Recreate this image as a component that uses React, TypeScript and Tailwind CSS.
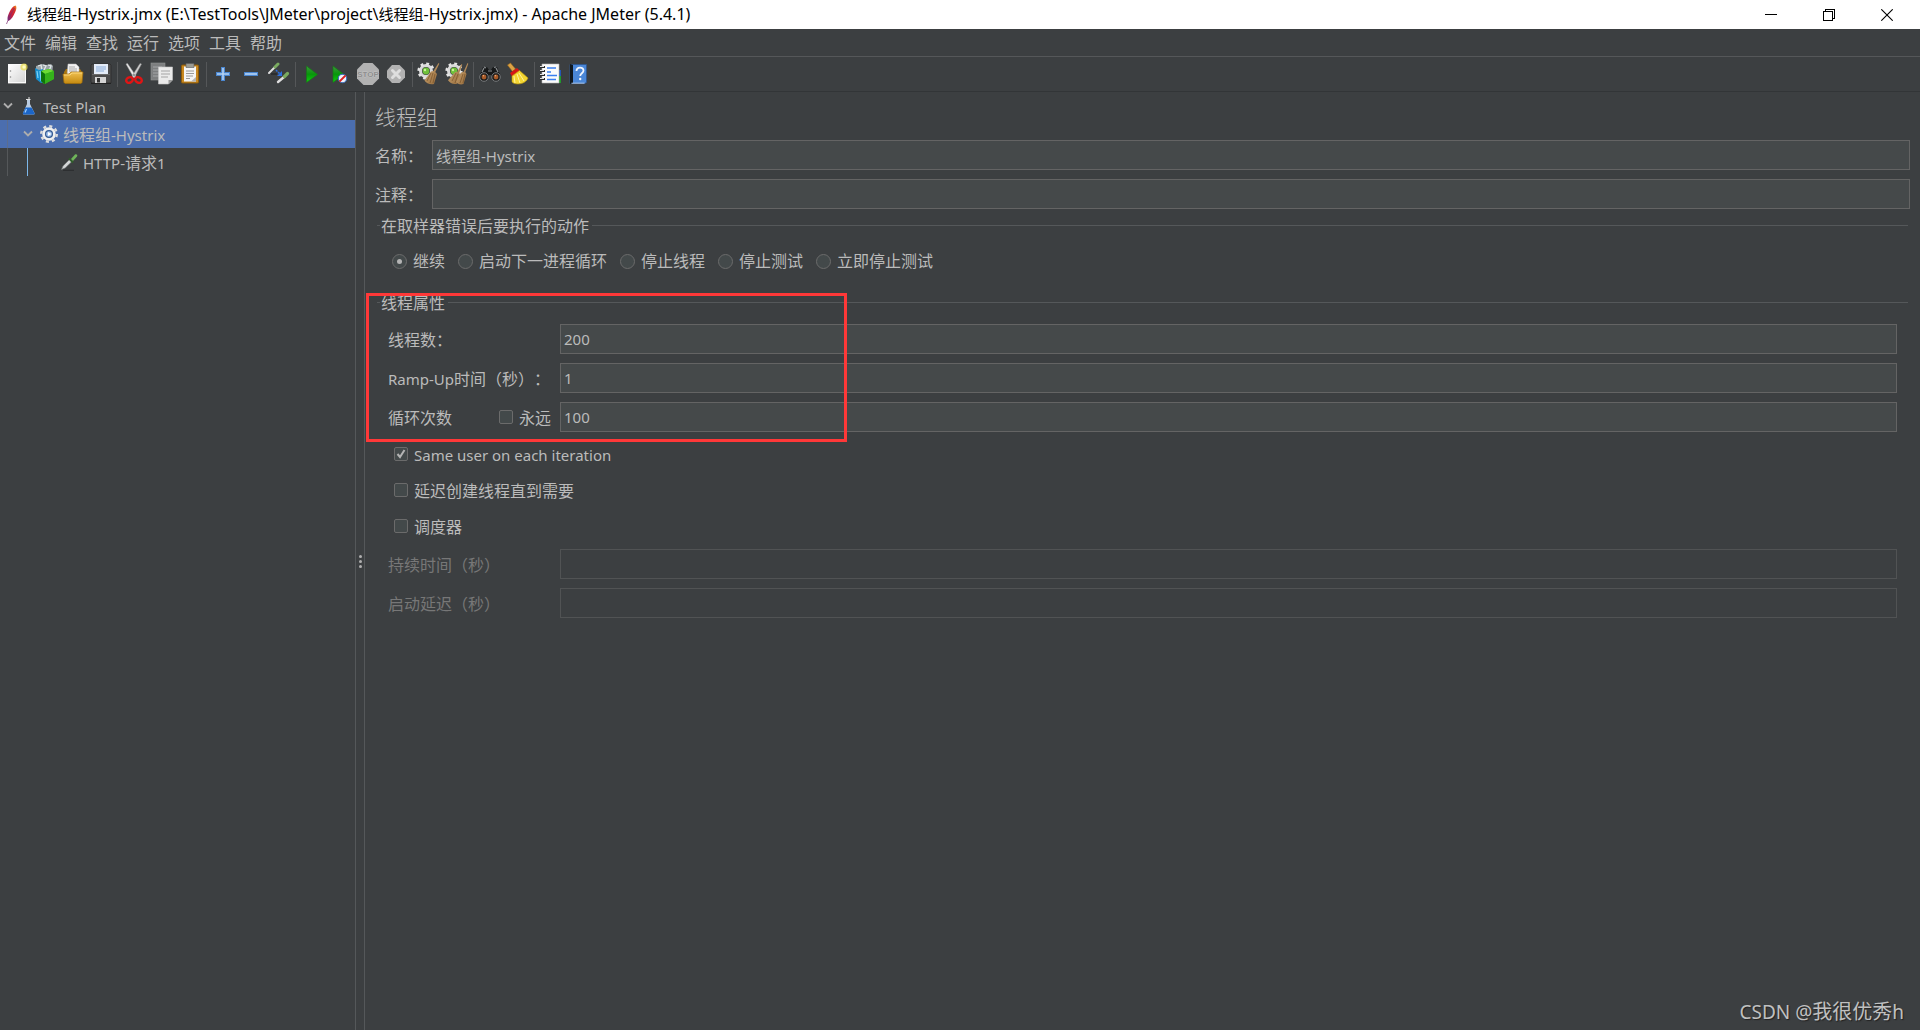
import React, { useState } from 'react';

type IconProps = { children: React.ReactNode };

function Icon({ children }: IconProps) {
  return (
    <svg viewBox="0 0 24 24" className="w-6 h-6" aria-hidden="true">
      {children}
    </svg>
  );
}

/* Shared gradients, referenced by id from the toolbar icons */
function Gradients() {
  return (
    <svg className="absolute w-0 h-0" aria-hidden="true">
      <defs>
        <linearGradient id="paper" x1="0" y1="0" x2="1" y2="1">
          <stop offset="0" stopColor="#ffffff" />
          <stop offset="1" stopColor="#d4d4d4" />
        </linearGradient>
        <linearGradient id="gold" x1="0" y1="0" x2="0" y2="1">
          <stop offset="0" stopColor="#f0c050" />
          <stop offset="1" stopColor="#c58a10" />
        </linearGradient>
        <linearGradient id="play" x1="0" y1="0" x2="0" y2="1">
          <stop offset="0" stopColor="#3d9a3d" />
          <stop offset="0.5" stopColor="#07960a" />
          <stop offset="1" stopColor="#0fd010" />
        </linearGradient>
        <linearGradient id="straw" x1="0" y1="0" x2="1" y2="1">
          <stop offset="0" stopColor="#d6b07c" />
          <stop offset="1" stopColor="#8d6334" />
        </linearGradient>
        <linearGradient id="feather" x1="0" y1="1" x2="1" y2="0">
          <stop offset="0" stopColor="#6a2a87" />
          <stop offset="0.45" stopColor="#c8203c" />
          <stop offset="0.75" stopColor="#d8322a" />
          <stop offset="1" stopColor="#f49a20" />
        </linearGradient>
      </defs>
    </svg>
  );
}

const NewIcon = () => (
  <Icon>
    <rect x="3.5" y="2.5" width="17" height="18" fill="url(#paper)" stroke="#fafafa" />
    <path d="M3 21.5h18" stroke="#8a8a8a" />
    <circle cx="5.5" cy="9" r="0.8" fill="#888" />
    <circle cx="5.5" cy="15" r="0.8" fill="#888" />
    <circle cx="19" cy="5" r="3.6" fill="#e9dc50" opacity="0.75" />
    <circle cx="19" cy="5" r="1.7" fill="#fffbc0" />
  </Icon>
);

const TemplatesIcon = () => (
  <Icon>
    <path d="M3 4l6-2 4 1 5-1 2 2-1 8-16 1z" fill="#9aa4a8" />
    <path d="M5 4l3-1 1 5M10 3l3 1-2 4M15 3l3 1-2 5" stroke="#e3e8ea" strokeWidth="1.3" fill="none" />
    <path d="M2 6l4 2 4-1 1 13-3 1-5-4z" fill="#168fd0" />
    <path d="M4 9l1 7M7 9l1 10" stroke="#7fd3f7" strokeWidth="1.2" />
    <path d="M8 9l8-2 5 2v8l-10 5-3-3z" fill="#2fa916" />
    <path d="M8 9l8-2 5 2-9 3z" fill="#6bda35" />
    <path d="M12 12l9-3v8l-9 5z" fill="#35b21b" />
    <path d="M8 9l4 3v10l-4-3z" fill="#0e740b" />
  </Icon>
);

const OpenIcon = () => (
  <Icon>
    <path d="M3 10l2-3h14l2 3v10l-1 1H4l-1-1z" fill="#a87610" />
    <path d="M7 2h8l3 3v9H6z" fill="#f2f2f2" stroke="#bbb" strokeWidth="0.5" />
    <path d="M8 5h6M8 7h8M8 9h8" stroke="#a9a9a9" />
    <path d="M2 12h6l2-2h12l-1 10.5-1 1H4l-1-1z" fill="url(#gold)" stroke="#a36f08" strokeWidth="0.7" />
    <path d="M3 13h6l2-2h10" stroke="#ffe08a" strokeWidth="0.8" fill="none" />
  </Icon>
);

const SaveIcon = () => (
  <Icon>
    <path d="M3 2h18l1 1v18H3l-1-1V3z" fill="#4c4c4c" stroke="#2b2b2b" strokeWidth="0.8" />
    <rect x="5" y="2" width="14" height="10" fill="#e4ecf8" />
    <path d="M7 5h10M7 7h10M7 9h8" stroke="#8badda" />
    <path d="M3 12.5h18" stroke="#6b6b6b" />
    <rect x="6" y="15" width="11" height="6" fill="#d4d4d4" />
    <rect x="8" y="16" width="3" height="4.5" fill="#333" />
    <path d="M2 21.5h20" stroke="#222" />
  </Icon>
);

const CutIcon = () => (
  <Icon>
    <path d="M4 2l1.5-.5L14 14l-2 2z" fill="#e9e9e9" stroke="#a0a0a0" strokeWidth="0.5" />
    <path d="M19.5 2L18 1.5 10 14l2 2z" fill="#d0d0d0" stroke="#8f8f8f" strokeWidth="0.5" />
    <ellipse cx="7.5" cy="18" rx="3.4" ry="2.7" fill="none" stroke="#e01515" strokeWidth="2.4" transform="rotate(-25 7.5 18)" />
    <ellipse cx="16.5" cy="18" rx="3.4" ry="2.7" fill="none" stroke="#e01515" strokeWidth="2.4" transform="rotate(25 16.5 18)" />
    <circle cx="12" cy="13" r="0.8" fill="#555" />
  </Icon>
);

const CopyIcon = () => (
  <Icon>
    <rect x="1" y="1" width="14" height="17" fill="#7d7f80" stroke="#909292" strokeWidth="0.6" />
    <path d="M3 5h9M3 8h6M3 11h6M3 14h6" stroke="#a5a7a8" />
    <path d="M8.5 5h14v13l-4 4h-10z" fill="#eaeaea" stroke="#c8c8c8" strokeWidth="0.6" />
    <path d="M11 9h9M11 12h9M11 15h7" stroke="#a4a4a4" />
    <path d="M22.5 18h-4v4z" fill="#9a9a9a" />
  </Icon>
);

const PasteIcon = () => (
  <Icon>
    <rect x="3.5" y="3" width="17" height="18" rx="1" fill="#c88820" stroke="#8b5a0a" />
    <path d="M6 4.5h12v15h-12z" fill="#f5f5f5" />
    <path d="M8 1.5h8v4H8z" fill="#9b9b93" stroke="#5a5a5a" strokeWidth="0.6" />
    <path d="M8 9h8M8 11.5h8M8 14h7M8 16.5h4" stroke="#9a9a9a" />
    <path d="M18 15v4.5h-5z" fill="#b5b5b5" />
  </Icon>
);

const PlusIcon = () => (
  <Icon>
    <path d="M12 5v14M5 12h14" stroke="#4a86cf" strokeWidth="4" />
    <path d="M12 6v12M6 12h12" stroke="#b4d2f4" strokeWidth="1.6" />
  </Icon>
);

const MinusIcon = () => (
  <Icon>
    <path d="M5 12h14" stroke="#4a86cf" strokeWidth="4" />
    <path d="M6 12h12" stroke="#b4d2f4" strokeWidth="1.6" />
  </Icon>
);

const ToggleIcon = () => (
  <Icon>
    <path d="M2 11l6-6" stroke="#dedede" strokeWidth="2" strokeLinecap="round" />
    <path d="M8 5l3-3" stroke="#7aab60" strokeWidth="3" strokeLinecap="round" />
    <path d="M11 20l6-5" stroke="#dedede" strokeWidth="2.4" strokeLinecap="round" />
    <path d="M17.5 14.5l3-3" stroke="#7aab60" strokeWidth="3.2" strokeLinecap="round" />
    <path d="M4 12h6" stroke="#26292b" strokeWidth="1.5" />
    <path d="M9 8l4 4" stroke="#2c6fe0" strokeWidth="1.5" strokeDasharray="2 1" />
    <path d="M15 9v5h-5z" fill="#2c6fe0" />
  </Icon>
);

const StartIcon = () => (
  <Icon>
    <path d="M6.5 4l11 8.5-11 8z" fill="url(#play)" stroke="#167a16" strokeWidth="0.7" />
  </Icon>
);

const StartNoPauseIcon = () => (
  <Icon>
    <path d="M5 4l11 8.5-11 8z" fill="url(#play)" stroke="#167a16" strokeWidth="0.7" />
    <circle cx="14.5" cy="16.500" r="4.2" fill="#eef2fa" stroke="#3b6cb8" strokeWidth="1.1" />
    <path d="M11.5 19.5l6-6" stroke="#dc2020" strokeWidth="1.8" />
  </Icon>
);

const StopIcon = () => (
  <Icon>
    <path d="M7.5 1h9L23 7.5v9L16.5 23h-9L1 16.5v-9z" fill="#b2b2b2" />
    <text x="12" y="15" textAnchor="middle" fontSize="8" fontWeight="700" fontFamily="Liberation Sans, sans-serif" fill="#8e8e8e" stroke="#d2d2d2" strokeWidth="0.5" paintOrder="stroke">
      STOP
    </text>
  </Icon>
);

const ShutdownIcon = () => (
  <Icon>
    <path d="M8 3h7.5L21 8.5v7L15.5 21H8l-5-5.5v-7z" fill="#b2b2b2" />
    <path d="M8.5 8.5l7 7M15.5 8.5l-7 7" stroke="#dedede" strokeWidth="3" strokeLinecap="round" />
  </Icon>
);

const Gear = () => (
  <>
    <circle cx="9" cy="9" r="5.5" fill="none" stroke="#d9d9d9" strokeWidth="3" />
    <circle cx="9" cy="9" r="7.3" fill="none" stroke="#e4e4e4" strokeWidth="2.6" strokeDasharray="2.8 2.93" />
    <circle cx="9" cy="9" r="3.4" fill="#6fc03a" />
    <circle cx="8" cy="8" r="1.2" fill="#c8f09a" />
  </>
);

const ClearIcon = () => (
  <Icon>
    <Gear />
    <path d="M21.5 1l.8.8-4 8.2 1.7 2-3 10c-4 1-8-1-9.5-3.5l6.5-9 2.5-.5z" fill="url(#straw)" />
    <path d="M14 11l-4 8M16 11l-3 10M18 12l-2 9" stroke="#785329" strokeWidth="0.7" />
  </Icon>
);

const ClearAllIcon = () => (
  <Icon>
    <Gear />
    <path d="M16.5 2l.8.8-3 8 .7 2-3 9c-4 1-7-1-9-3.5l7-8 2.5-.5z" fill="url(#straw)" />
    <path d="M22.5 1l.8.8-3 8.2 1.2 2-3 10c-3 1-6 0-7.5-2l5-9.5 2.5-.5z" fill="url(#straw)" />
    <path d="M11 11l-4 8M13 12l-3 9M18 12l-3 9M20 12l-2 9" stroke="#785329" strokeWidth="0.7" />
  </Icon>
);

const FindIcon = () => (
  <Icon>
    <path d="M5 5h4l2 3h2l2-3h4l3.5 9-1.5 4h-6l-2-5h-2l-2 5H3l-1.5-4z" fill="#17191a" />
    <path d="M6 5l2 1M16 5.5l2-.5M4 10l2-4M20 10l-2-4M10 9h4" stroke="#8a8e90" strokeWidth="1.2" />
    <circle cx="6" cy="15" r="4.3" fill="#1d1d1d" stroke="#777a7c" strokeWidth="1" />
    <circle cx="18" cy="15" r="4.3" fill="#1d1d1d" stroke="#777a7c" strokeWidth="1" />
    <circle cx="6" cy="15" r="2.4" fill="#a85a28" />
    <circle cx="18" cy="15" r="2.4" fill="#a85a28" />
    <path d="M5 14l1-.6M17 14l1-.6" stroke="#f0b890" strokeWidth="1.2" />
  </Icon>
);

const BroomIcon = () => (
  <Icon>
    <path d="M1.5 3l3-2 5 6-3 2.5z" fill="#dba245" stroke="#9a6a1c" strokeWidth="0.6" />
    <path d="M4 11l7-5 3 3-8 5.5z" fill="#d51616" />
    <path d="M6 14l7.5-5.5L22 16c-1 3-5 6-10 6-3 0-5-1-6-2z" fill="#f3d531" stroke="#b9930c" strokeWidth="0.6" />
    <path d="M8 14l1 7M11 12l3 9M13 11l5 8" stroke="#fff39a" strokeWidth="1" />
  </Icon>
);

const FunctionListIcon = () => (
  <Icon>
    <rect x="18" y="8" width="4" height="6" fill="#2457b5" />
    <rect x="18" y="14" width="4" height="7" fill="#1f9a2c" />
    <path d="M3 2h17v19H3z" fill="#fbfbfb" stroke="#b6b6b6" strokeWidth="0.6" />
    <path d="M1 5h5M1 9h5M1 13h5M1 17h5" stroke="#2a2a2a" strokeWidth="2" />
    <path d="M1 4.5h4M1 8.5h4M1 12.5h4M1 16.5h4" stroke="#e0e0e0" strokeWidth="1" />
    <path d="M8 6h9M8 10h4M8 13.5h10M8 17.5h9" stroke="#3a7ff0" strokeWidth="1.3" />
  </Icon>
);

const HelpIcon = () => (
  <Icon>
    <path d="M3 2.5h16.5v18l-2 1H3z" fill="#4a87d8" stroke="#2d568f" strokeWidth="0.8" />
    <path d="M3 2l3 1v18l-3 1z" fill="#101820" />
    <path d="M4.5 21.2h13" stroke="#cfe0f5" strokeWidth="0.8" />
    <path d="M9.5 9c0-4.500 7-4.500 7-.5 0 2.800-3.300 2.600-3.300 5.500" fill="none" stroke="#f0f6ff" strokeWidth="1.8" />
    <circle cx="13.200" cy="17" r="1.2" fill="#f0f6ff" />
  </Icon>
);

const toolbarGroups = [
  [
    { label: '新建', icon: NewIcon },
    { label: '模板', icon: TemplatesIcon },
    { label: '打开', icon: OpenIcon },
    { label: '保存', icon: SaveIcon },
  ],
  [
    { label: '剪切', icon: CutIcon },
    { label: '复制', icon: CopyIcon },
    { label: '粘贴', icon: PasteIcon },
  ],
  [
    { label: '展开', icon: PlusIcon },
    { label: '折叠', icon: MinusIcon },
    { label: '切换', icon: ToggleIcon },
  ],
  [
    { label: '启动', icon: StartIcon },
    { label: '不停顿启动', icon: StartNoPauseIcon },
    { label: '停止', icon: StopIcon },
    { label: '关闭', icon: ShutdownIcon },
  ],
  [
    { label: '清除', icon: ClearIcon },
    { label: '清除全部', icon: ClearAllIcon },
  ],
  [
    { label: '查找', icon: FindIcon },
    { label: '重置搜索', icon: BroomIcon },
  ],
  [
    { label: '函数助手', icon: FunctionListIcon },
    { label: '帮助', icon: HelpIcon },
  ],
];

const menus = ['文件', '编辑', '查找', '运行', '选项', '工具', '帮助'];

const errorActions = ['继续', '启动下一进程循环', '停止线程', '停止测试', '立即停止测试'];

function TitleBar() {
  return (
    <header className="flex h-[29px] items-center bg-white text-black">
      <svg viewBox="0 0 12 20" className="ml-[5px] w-3 h-5 shrink-0" aria-hidden="true">
        <path d="M10.5 0.5c1.500 1 1 4-.5 7-1.500 3.500-3.500 7-6.500 8.500C1.5 14 3 10 4.5 7 6 4 8 1 10.5.5z" fill="url(#feather)" />
        <path d="M9.5 3C7 7 4 12 1.5 19" stroke="#7b2b6f" strokeWidth="0.7" fill="none" />
      </svg>
      <h1 className="ml-[10px] flex-1 whitespace-nowrap pb-[2px] leading-5">
        <span className="text-[15px]">线程组</span>-Hystrix.jmx (E:\TestTools\JMeter\project\
        <span className="text-[15px]">线程组</span>-Hystrix.jmx) - Apache JMeter (5.4.1)
      </h1>
      <div className="flex h-full pr-1">
        <button aria-label="最小化" className="flex w-[58px] items-center justify-center">
          <svg viewBox="0 0 12 12" className="w-3 h-3" shapeRendering="crispEdges">
            <path d="M0 5.5h12" stroke="#000" />
          </svg>
        </button>
        <button aria-label="还原" className="flex w-[58px] items-center justify-center">
          <svg viewBox="0 0 12 12" className="w-3 h-3" shapeRendering="crispEdges">
            <path d="M.5 2.5h9v9h-9zM2.5 2V.5h9v9H10" stroke="#000" fill="none" />
          </svg>
        </button>
        <button aria-label="关闭窗口" className="flex w-[58px] items-center justify-center">
          <svg viewBox="0 0 12 12" className="w-3 h-3">
            <path d="M.3.3l11.4 11.4M11.7.3L.3 11.7" stroke="#000" strokeWidth="1.1" />
          </svg>
        </button>
      </div>
    </header>
  );
}

function Toolbar() {
  return (
    <div className="flex h-[35px] items-center border-b border-[#323537] pl-[3px]">
      {toolbarGroups.map((group, i) => (
        <React.Fragment key={i}>
          {i > 0 && <span className="mx-[2px] h-[25px] w-px bg-[#555759]" />}
          {group.map(({ label, icon: ToolIcon }) => (
            <button key={label} aria-label={label} className="flex w-7 h-7 items-center justify-center">
              <ToolIcon />
            </button>
          ))}
        </React.Fragment>
      ))}
    </div>
  );
}

function Chevron() {
  return (
    <svg viewBox="0 0 10 10" className="w-[10px] h-[10px] shrink-0" aria-hidden="true">
      <path d="M1 2.5l4 4 4-4" fill="none" stroke="#adadad" strokeWidth="1.8" />
    </svg>
  );
}

function TestTree() {
  return (
    <ul className="w-[355px] shrink-0" role="tree">
      <li role="treeitem" className="flex h-7 items-center pl-[3px]">
        <Chevron />
        <svg viewBox="0 0 18 18" className="ml-[7px] w-[18px] h-[18px] shrink-0" aria-hidden="true">
          <path d="M7 2h3v5l4.5 9c.3 1-.3 1.5-1 1.5h-9.5c-1 0-1.3-.7-1-1.5L7 7z" fill="#b9cbe0" />
          <path d="M5.5 10.5h6l3 5.5c.3 1-.3 1.5-1 1.5h-9.5c-1 0-1.3-.7-1-1.5z" fill="#1c66c8" />
          <path d="M6.5 12l-1.5 3.5" stroke="#9fd0ff" strokeWidth="1.2" />
          <path d="M6 2.5h4.5M9 0v2" stroke="#e3e3e3" strokeWidth="1" />
        </svg>
        <span className="ml-[5px] pt-[2px] text-[15px]">Test Plan</span>
      </li>
      <li role="treeitem" aria-selected="true" className="flex h-7 items-center bg-[#4b6eaf]">
        <span className="h-full w-2 border-r border-[#5b6d8f]" />
        <span className="ml-[15px] flex">
          <Chevron />
        </span>
        <svg viewBox="0 0 18 18" className="ml-[7px] w-[18px] h-[18px] shrink-0" aria-hidden="true">
          <circle cx="9" cy="9" r="5.5" fill="#c3d5ef" stroke="#efefef" strokeWidth="2.6" />
          <circle cx="9" cy="9" r="7.8" fill="none" stroke="#dcdcdc" strokeWidth="2.4" strokeDasharray="3.06 3.066" />
          <circle cx="9" cy="9" r="4" fill="#35598f" />
          <circle cx="9" cy="9" r="2.8" fill="#9fc0ec" />
          <path d="M8 7l3.5 2L8 11z" fill="#fff" />
        </svg>
        <span className="ml-[5px] pt-[2px]">
          线程组<span className="text-[15px]">-Hystrix</span>
        </span>
      </li>
      <li role="treeitem" className="flex h-7 items-center">
        <span className="h-full w-2 border-r border-[#55585a]" />
        <span className="h-full w-5 border-r border-[#7db8ea]" />
        <svg viewBox="0 0 18 18" className="ml-8 w-[18px] h-[18px] shrink-0" aria-hidden="true">
          <path d="M1.5 16.5L3 13l7-7 2.2 2.2-7 6.8z" fill="#d4d6d8" stroke="#6f7274" strokeWidth="0.6" />
          <path d="M9 5.5l4 4" stroke="#2f5f2a" strokeWidth="2" />
          <path d="M11 6l4-4.5c1.5-1 3 .5 2 2L13 8z" fill="#6fb45a" />
          <path d="M3 17.3h11" stroke="#2a2c2d" strokeWidth="1" />
        </svg>
        <span className="ml-[5px] pt-[2px]">
          <span className="text-[15px]">HTTP-</span>请求<span className="text-[15px]">1</span>
        </span>
      </li>
    </ul>
  );
}

function GroupLegend({ title }: { title: string }) {
  return (
    <legend className="flex h-6 w-full items-center gap-[3px] px-[2px]">
      <span className="-mr-[2px] h-px w-[3px] bg-[#55585a]" />
      <span className="pt-[2px]">{title}</span>
      <span className="h-px flex-1 bg-[#55585a]" />
    </legend>
  );
}

function TextInput({ id, value, disabled }: { id: string; value: string; disabled?: boolean }) {
  return (
    <input
      id={id}
      type="text"
      defaultValue={value}
      disabled={disabled}
      className="h-[30px] min-w-0 flex-1 border border-[#646464] bg-[#45494a] px-[3px] text-[15px] outline-none disabled:border-[#515354] disabled:bg-transparent"
    />
  );
}

interface FieldProps {
  id: string;
  label: React.ReactNode;
  value?: string;
  disabled?: boolean;
  narrow?: boolean;
}

function Field({ id, label, value = '', disabled, narrow }: FieldProps) {
  return (
    <div className={`flex h-[30px] items-center ${disabled ? 'text-[#777777]' : ''}`}>
      <label htmlFor={id} className={`shrink-0 whitespace-nowrap pt-[2px] ${narrow ? 'w-[57px]' : 'w-[172px]'}`}>
        {label}
      </label>
      <TextInput id={id} value={value} disabled={disabled} />
    </div>
  );
}

function Check({ label, checked = false }: { label: React.ReactNode; checked?: boolean }) {
  return (
    <label className="flex h-6 items-center gap-[6px] whitespace-nowrap">
      <span className="grid pb-[2px]">
        <input
          type="checkbox"
          defaultChecked={checked}
          className="peer col-start-1 row-start-1 w-[14px] h-[14px] appearance-none rounded-[2px] border border-[#6b6b6b] bg-[#43494a]"
        />
        <svg viewBox="0 0 14 14" className="pointer-events-none col-start-1 row-start-1 hidden w-[14px] h-[14px] peer-checked:block" aria-hidden="true">
          <path d="M3.5 7l2.5 3 4.5-7" fill="none" stroke="#b4b4b4" strokeWidth="2" />
        </svg>
      </span>
      {label}
    </label>
  );
}

function ThreadGroupPanel() {
  const [action, setAction] = useState('继续');

  return (
    <main className="min-w-0 flex-1 border-l border-[#55585a] px-[10px]">
      <h2 className="flex h-12 items-center pt-[2px] text-[21px] font-light">线程组</h2>
      <div className="flex flex-col gap-[9px]">
        <Field id="name" label="名称：" value="线程组-Hystrix" narrow />
        <Field id="comment" label="注释：" narrow />
      </div>

      <fieldset className="mt-1">
        <GroupLegend title="在取样器错误后要执行的动作" />
        <div className="mt-3 flex gap-[13px] pl-[17px]">
          {errorActions.map((name) => (
            <label key={name} className="flex h-6 items-center gap-[6px]">
              <span className="grid place-items-center">
                <input
                  type="radio"
                  name="on-error"
                  checked={action === name}
                  onChange={() => setAction(name)}
                  className="peer col-start-1 row-start-1 w-[15px] h-[15px] appearance-none rounded-full border border-[#6b6b6b] bg-[#43494a]"
                />
                <span className="pointer-events-none col-start-1 row-start-1 hidden w-[5px] h-[5px] rounded-full bg-[#b4b4b4] peer-checked:block" />
              </span>
              {name}
            </label>
          ))}
        </div>
      </fieldset>

      <fieldset className="mt-[17px]">
        <GroupLegend title="线程属性" />
        <div className="relative mt-[10px] flex flex-col gap-[9px] px-[13px]">
          <Field id="threads" label="线程数：" value="200" />
          <Field
            id="ramp-up"
            label={
              <>
                <span className="text-[15px]">Ramp-Up</span>时间（秒）：
              </>
            }
            value="1"
          />
          <div className="flex h-[30px] items-center">
            <label htmlFor="loops" className="w-[111px] shrink-0 pt-[2px]">
              循环次数
            </label>
            <div className="w-[61px] shrink-0 pt-[2px]">
              <Check label="永远" />
            </div>
            <TextInput id="loops" value="100" />
          </div>
          {/* highlight around the thread settings */}
          <div className="pointer-events-none absolute -left-[9px] -top-[31px] h-[149px] w-[481px] border-3 border-[#ff3838]" />
        </div>
        <div className="mt-[11px] flex flex-col items-start gap-3 pl-[19px]">
          <Check label={<span className="text-[15px]">Same user on each iteration</span>} checked />
          <Check label="延迟创建线程直到需要" />
          <Check label="调度器" />
        </div>
        <div className="mt-[10px] flex flex-col gap-[9px] px-[13px]">
          <Field id="duration" label="持续时间（秒）" disabled />
          <Field id="delay" label="启动延迟（秒）" disabled />
        </div>
      </fieldset>
    </main>
  );
}

export default function App() {
  return (
    <div className="relative flex min-h-screen flex-col bg-[#3c3f41] font-['Noto_Sans','Noto_Sans_CJK_SC',sans-serif] text-base leading-6 text-[#bbbbbb] [text-spacing-trim:space-all]">
      <Gradients />
      <TitleBar />
      <nav className="flex h-7 items-center gap-[9px] border-b border-[#555759] pl-1">
        {menus.map((menu) => (
          <button key={menu}>{menu}</button>
        ))}
      </nav>
      <Toolbar />
      <div className="flex flex-1">
        <TestTree />
        <div className="flex w-[9px] shrink-0 cursor-col-resize flex-col items-center justify-center gap-[2px] border-l border-[#55585a]">
          <span className="w-[3px] h-[3px] rounded-full bg-[#b0b0b0]" />
          <span className="w-[3px] h-[3px] rounded-full bg-[#b0b0b0]" />
          <span className="w-[3px] h-[3px] rounded-full bg-[#b0b0b0]" />
        </div>
        <ThreadGroupPanel />
      </div>
      <span className="absolute bottom-1 right-4 text-xl leading-7 text-[#c0c0c0] [text-shadow:1px_1px_1px_#222]">
        <span className="text-[19px]">CSDN @</span>我很优秀<span className="text-[19px]">h</span>
      </span>
    </div>
  );
}
